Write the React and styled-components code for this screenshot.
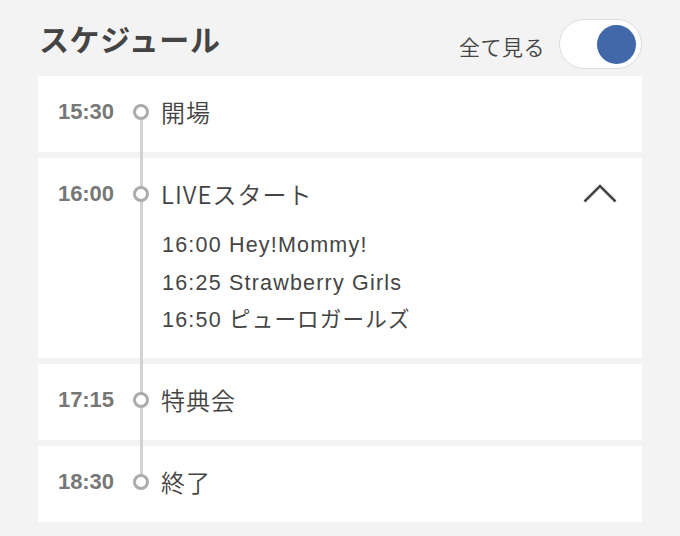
import React from "react";
import styled, { createGlobalStyle } from "styled-components";

const GlobalStyle = createGlobalStyle`
  html, body {
    margin: 0;
    padding: 0;
    background: #f3f3f3;
  }
  body {
    font-family: "Noto Sans CJK JP", "Noto Sans", sans-serif;
    color: #444;
  }
`;

const Page = styled.div`
  width: 680px;
  height: 536px;
  box-sizing: border-box;
  padding: 0 38px;
  background: #f3f3f3;
  overflow: hidden;
`;

const Header = styled.div`
  display: flex;
  align-items: center;
  justify-content: space-between;
  height: 50px;
  margin-top: 19px;
  margin-bottom: 7px;
`;

const Title = styled.h1`
  margin: 0 0 12px 1px;
  font-size: 30px;
  line-height: 1;
  font-weight: 700;
  color: #444;
  letter-spacing: 0.6px;
`;

const ToggleGroup = styled.div`
  display: flex;
  align-items: center;
`;

const ToggleLabel = styled.span`
  font-size: 21px;
  line-height: 1;
  font-weight: 350;
  color: #444;
  margin-right: 14px;
  margin-top: 4px;
  letter-spacing: 0.5px;
`;

const Switch = styled.div`
  width: 83px;
  height: 50px;
  box-sizing: border-box;
  border: 1px solid #dcdcdc;
  border-radius: 25px;
  background: #fff;
  display: flex;
  align-items: center;
  justify-content: ${(p) => (p.$on ? "flex-end" : "flex-start")};
  padding: 0 5px;
`;

const Knob = styled.div`
  width: 39px;
  height: 39px;
  border-radius: 50%;
  background: #4168a8;
`;

const Timeline = styled.div`
  position: relative;
  display: flex;
  flex-direction: column;
  gap: 6px;
`;

const Line = styled.div`
  position: absolute;
  left: 102px;
  width: 3px;
  top: 36px;
  bottom: 40px;
  background: #d2d2d2;
  z-index: 1;
`;

const Card = styled.div`
  background: #fff;
  padding: 24px 0 ${(p) => (p.$expanded ? "18px" : "28px")} 20px;
`;

const Row = styled.div`
  display: flex;
  align-items: center;
  height: 24px;
`;

const Time = styled.span`
  width: 75px;
  font-family: "Liberation Sans", Arial, sans-serif;
  font-weight: 700;
  font-size: 22px;
  color: #777;
  letter-spacing: -0.1px;
`;

const Dot = styled.span`
  position: relative;
  z-index: 2;
  width: 16px;
  height: 16px;
  box-sizing: border-box;
  border-radius: 50%;
  border: 3.5px solid #ababab;
  background: #fff;
  flex-shrink: 0;
`;

const Label = styled.span`
  margin-left: 12px;
  font-size: 24px;
  line-height: 1;
  font-weight: 350;
  color: #444;
  letter-spacing: 1px;
`;

const Chevron = styled.svg`
  margin-left: auto;
  margin-right: 25px;
  width: 34px;
  height: 20px;
`;

const SubList = styled.ul`
  list-style: none;
  margin: 21px 0 0 104px;
  padding: 0;
`;

const SubItem = styled.li`
  font-family: "Liberation Sans", "Noto Sans CJK JP", sans-serif;
  font-size: 21.5px;
  font-weight: 400;
  line-height: 37.5px;
  color: #454545;
  letter-spacing: 1.2px;
`;

const schedule = [
  { time: "15:30", label: "開場" },
  {
    time: "16:00",
    label: "LIVEスタート",
    items: [
      "16:00 Hey!Mommy!",
      "16:25 Strawberry Girls",
      "16:50 ピューロガールズ",
    ],
  },
  { time: "17:15", label: "特典会" },
  { time: "18:30", label: "終了" },
];

export default function App() {
  return (
    <Page>
      <GlobalStyle />
      <Header>
        <Title>スケジュール</Title>
        <ToggleGroup>
          <ToggleLabel>全て見る</ToggleLabel>
          <Switch $on>
            <Knob />
          </Switch>
        </ToggleGroup>
      </Header>
      <Timeline>
        <Line />
        {schedule.map((s) => (
          <Card key={s.time} $expanded={!!s.items}>
            <Row>
              <Time>{s.time}</Time>
              <Dot />
              <Label>{s.label}</Label>
              {s.items && (
                <Chevron viewBox="0 0 34 20" fill="none">
                  <path
                    d="M1.5 17.5 L17 2 L32.5 17.5"
                    stroke="#444"
                    strokeWidth="2.6"
                    strokeLinecap="butt"
                    strokeLinejoin="miter"
                  />
                </Chevron>
              )}
            </Row>
            {s.items && (
              <SubList>
                {s.items.map((it) => (
                  <SubItem key={it}>{it}</SubItem>
                ))}
              </SubList>
            )}
          </Card>
        ))}
      </Timeline>
    </Page>
  );
}
